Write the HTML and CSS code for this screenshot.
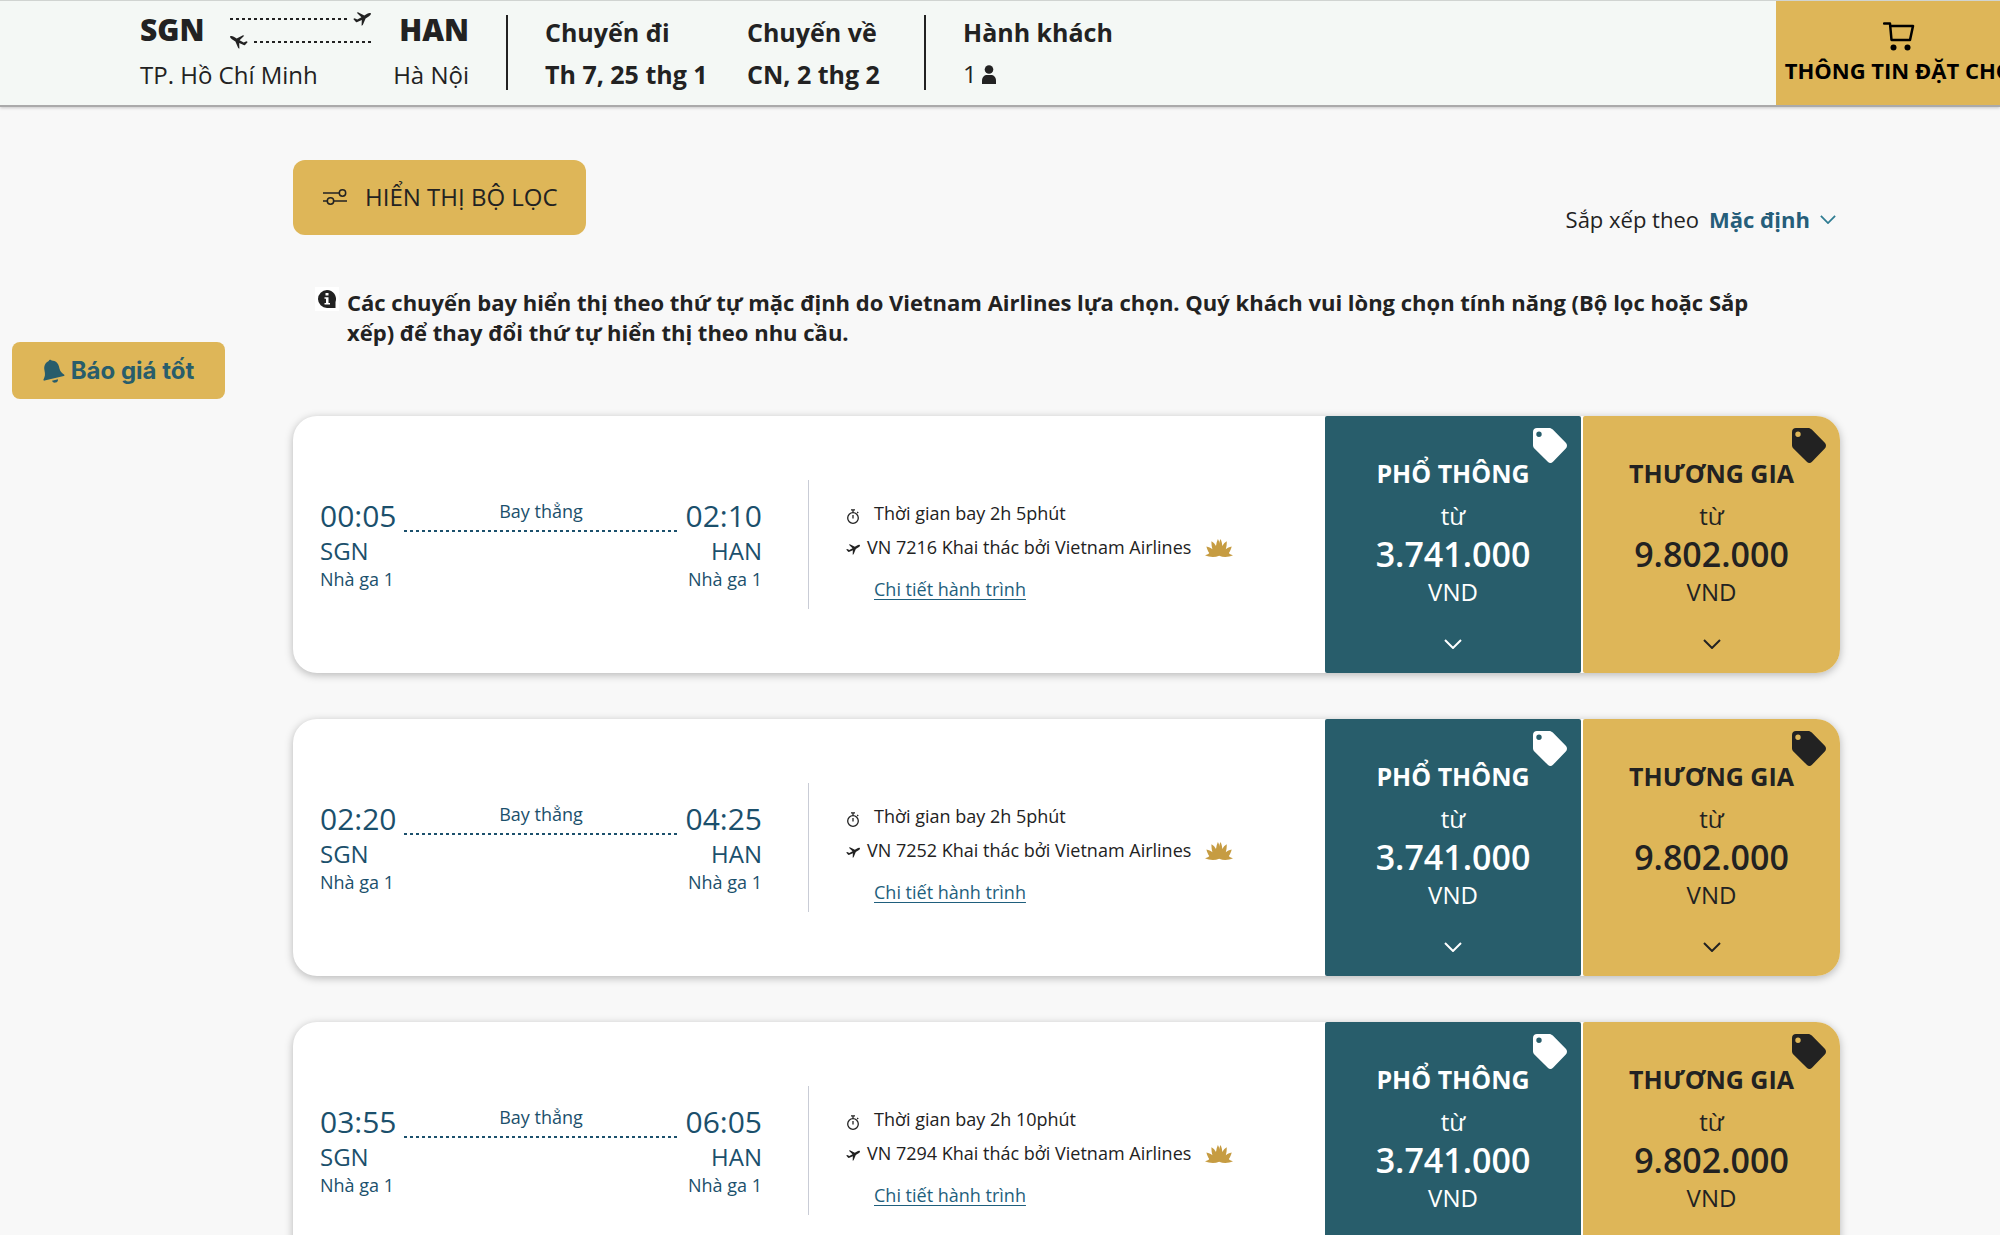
FILE: index.html
```
<!DOCTYPE html>
<html lang="vi">
<head>
<meta charset="utf-8">
<meta name="viewport" content="width=device-width, initial-scale=1">
<title>Chọn chuyến bay</title>
<link rel="stylesheet" href="styles.css">
</head>
<body>
<svg class="sprite" aria-hidden="true">
  <symbol id="plane" viewBox="0 0 18 14"><path d="M17.800 1.300C17 .7 15.500 1 14.200 1.800L11.300 3.600 5 .3 3.800.8l4.600 4.500L4.300 7.500 1.500 6.300.3 6.900l2.200 2.700c.5.600 1 .7 1.800.3l4.500-1.900L8.600 13.700l1.200-.6 2.800-6.700 3.500-2.200C17.400 3.300 18.300 2 17.800 1.300Z"/></symbol>
  <symbol id="chevron" viewBox="0 0 18 10"><path d="M1 1l8 8 8-8" fill="none" stroke="currentColor" stroke-width="2"/></symbol>
  <symbol id="tag" viewBox="0 0 34 35"><path fill-rule="evenodd" d="M4 0h12c1.600 0 2.700.5 3.800 1.600l13 13.200c1.600 1.700 1.600 4 0 5.700L20 33.800c-1.600 1.600-3.600 1.600-5.200 0L1.400 20.400C.4 19.400 0 18.400 0 17V4C0 1.600 1.600 0 4 0Zm2 3.600a2.700 2.700 0 1 0 0 5.400 2.700 2.700 0 0 0 0-5.400Z"/></symbol>
  <symbol id="timer" viewBox="0 0 14 15"><g fill="none" stroke="currentColor" stroke-width="1.300"><circle cx="7" cy="9" r="5.300"/><path d="M5 .8h4M7 1v2.500M7 6v3.500M11.200 4l1-1"/></g></symbol>
  <symbol id="lotus" viewBox="0 0 28 18"><path d="M0 16.200C2.400 15.600 3.600 15 4.200 14 2.800 12 2 10 1.400 7.600c2.400.4 4.300 1.200 6 2.600C6.600 7.300 6.300 4.800 6.500 2.200c2 1.200 3.500 2.800 4.500 4.800.3-2.600 1-4.800 1.900-7 1 1.500 1.300 3 1.300 4.800C14.300 3 14.700 1.500 15.600 0c1 2.200 1.500 4.400 1.700 7 1-2 2.500-3.600 4.400-4.800.2 2.600-.1 5.100-.9 8 1.700-1.400 3.500-2.200 5.900-2.600-.6 2.400-1.400 4.400-2.800 6.400.6 1 1.800 1.600 4.100 2.200-4.500 2-9.500 2.300-13.800.5C9.700 18.500 4.500 18.200 0 16.200Z"/></symbol>
</svg>

<header class="topbar">
  <div class="route">
    <div class="stop">
      <strong class="code">SGN</strong>
      <span class="city">TP. Hồ Chí Minh</span>
    </div>
    <div class="path">
      <div class="leg"><i class="dash"></i><svg class="plane-lg"><use href="#plane"/></svg></div>
      <div class="leg back"><i class="dash"></i><svg class="plane-lg"><use href="#plane"/></svg></div>
    </div>
    <div class="stop end">
      <strong class="code">HAN</strong>
      <span class="city">Hà Nội</span>
    </div>
  </div>
  <div class="facts dates">
    <div class="fact"><b>Chuyến đi</b><b>Th 7, 25 thg 1</b></div>
    <div class="fact"><b>Chuyến về</b><b>CN, 2 thg 2</b></div>
  </div>
  <div class="facts">
    <div class="fact"><b>Hành khách</b><span class="count">1
      <svg class="person" viewBox="0 0 14 19"><circle cx="7" cy="4.500" r="4.300"/><path d="M0 19v-3.500C0 12 2.500 10 5 10h4c2.500 0 5 2 5 5.500V19Z"/></svg></span></div>
  </div>
  <button class="cart" type="button">
    <svg class="cart-icon" viewBox="0 0 32 29"><path d="M1 1.500h6L8.500 18H27l3-14H7.500" fill="none" stroke="currentColor" stroke-width="2.500" stroke-linejoin="round" stroke-linecap="round"/><circle cx="10.500" cy="25.500" r="3"/><circle cx="24.500" cy="25.500" r="3"/></svg>
    THÔNG TIN ĐẶT CHỖ
  </button>
</header>

<button class="alert" type="button">
  <svg class="bell" viewBox="0 0 22 24"><path d="M5.800 2C6 .6 8 .2 8.600 1.500c4 .2 6.600 2.600 7.500 6.500.9 4 2 5.700 4.900 7.400.8.500.6 1.400-.2 1.600L1.600 21.600c-.9.200-1.500-.6-1-1.400C2.200 17.200 2.300 15.300 1.500 11.500.6 7 2.200 3.800 5.800 2Z"/><path d="M9 21.700l6-1.500c.2 1.600-.8 3-2.400 3.400C11 23.900 9.500 23.100 9 21.700Z"/></svg>
  Báo giá tốt
</button>

<main class="results">
  <div class="tools">
    <button class="filter" type="button">
      <svg class="sliders" viewBox="0 0 24 16"><g fill="none" stroke="currentColor" stroke-width="1.500"><path d="M0 4h16M0 12h4M11 12h13"/><circle cx="19.500" cy="4" r="3.200"/><circle cx="7.500" cy="12" r="3.200"/></g></svg>
      HIỂN THỊ BỘ LỌC
    </button>
    <div class="sort">
      <label for="sort">Sắp xếp theo</label>
      <select id="sort"><option>Mặc định</option></select>
      <svg class="sort-arrow"><use href="#chevron"/></svg>
    </div>
  </div>

  <div class="note">
    <svg class="info" viewBox="0 0 24 24"><path d="M12 3a9 9 0 1 0 0 18h8.500v-6A9 9 0 0 0 12 3Z"/><path d="M10.500 6h3v2.600h-3zM9.500 10.200h4V16H15v1.600H9.500V16H11v-4.200H9.500Z" fill="#fff"/></svg>
    <p>Các chuyến bay hiển thị theo thứ tự mặc định do Vietnam Airlines lựa chọn. Quý khách vui lòng chọn tính năng (Bộ lọc hoặc Sắp xếp) để thay đổi thứ tự hiển thị theo nhu cầu.</p>
  </div>

  <article class="card">
    <div class="trip">
      <div class="point"><span class="time">00:05</span><span class="airport">SGN</span><span class="gate">Nhà ga 1</span></div>
      <div class="direct">Bay thẳng</div>
      <div class="point end"><span class="time">02:10</span><span class="airport">HAN</span><span class="gate">Nhà ga 1</span></div>
    </div>
    <div class="details">
      <div class="line timing"><svg class="timer"><use href="#timer"/></svg>Thời gian bay 2h 5phút</div>
      <div class="line"><svg class="plane-sm"><use href="#plane"/></svg>VN 7216 Khai thác bởi Vietnam Airlines<svg class="lotus"><use href="#lotus"/></svg></div>
      <a href="#">Chi tiết hành trình</a>
    </div>
    <button class="fare economy" type="button"><svg class="tag"><use href="#tag"/></svg><b class="cabin">PHỔ THÔNG</b><span>từ</span><b class="price">3.741.000</b><span>VND</span><svg class="open"><use href="#chevron"/></svg></button>
    <button class="fare business" type="button"><svg class="tag"><use href="#tag"/></svg><b class="cabin">THƯƠNG GIA</b><span>từ</span><b class="price">9.802.000</b><span>VND</span><svg class="open"><use href="#chevron"/></svg></button>
  </article>

  <article class="card">
    <div class="trip">
      <div class="point"><span class="time">02:20</span><span class="airport">SGN</span><span class="gate">Nhà ga 1</span></div>
      <div class="direct">Bay thẳng</div>
      <div class="point end"><span class="time">04:25</span><span class="airport">HAN</span><span class="gate">Nhà ga 1</span></div>
    </div>
    <div class="details">
      <div class="line timing"><svg class="timer"><use href="#timer"/></svg>Thời gian bay 2h 5phút</div>
      <div class="line"><svg class="plane-sm"><use href="#plane"/></svg>VN 7252 Khai thác bởi Vietnam Airlines<svg class="lotus"><use href="#lotus"/></svg></div>
      <a href="#">Chi tiết hành trình</a>
    </div>
    <button class="fare economy" type="button"><svg class="tag"><use href="#tag"/></svg><b class="cabin">PHỔ THÔNG</b><span>từ</span><b class="price">3.741.000</b><span>VND</span><svg class="open"><use href="#chevron"/></svg></button>
    <button class="fare business" type="button"><svg class="tag"><use href="#tag"/></svg><b class="cabin">THƯƠNG GIA</b><span>từ</span><b class="price">9.802.000</b><span>VND</span><svg class="open"><use href="#chevron"/></svg></button>
  </article>

  <article class="card">
    <div class="trip">
      <div class="point"><span class="time">03:55</span><span class="airport">SGN</span><span class="gate">Nhà ga 1</span></div>
      <div class="direct">Bay thẳng</div>
      <div class="point end"><span class="time">06:05</span><span class="airport">HAN</span><span class="gate">Nhà ga 1</span></div>
    </div>
    <div class="details">
      <div class="line timing"><svg class="timer"><use href="#timer"/></svg>Thời gian bay 2h 10phút</div>
      <div class="line"><svg class="plane-sm"><use href="#plane"/></svg>VN 7294 Khai thác bởi Vietnam Airlines<svg class="lotus"><use href="#lotus"/></svg></div>
      <a href="#">Chi tiết hành trình</a>
    </div>
    <button class="fare economy" type="button"><svg class="tag"><use href="#tag"/></svg><b class="cabin">PHỔ THÔNG</b><span>từ</span><b class="price">3.741.000</b><span>VND</span><svg class="open"><use href="#chevron"/></svg></button>
    <button class="fare business" type="button"><svg class="tag"><use href="#tag"/></svg><b class="cabin">THƯƠNG GIA</b><span>từ</span><b class="price">9.802.000</b><span>VND</span><svg class="open"><use href="#chevron"/></svg></button>
  </article>
</main>
</body>
</html>
```
FILE: styles.css
```
:root {
  --gold: #deb658;
  --teal: #285d6b;
  --ink: #222;
  --blue: #1b506c;
}
* { box-sizing: border-box; }
body {
  margin: 0;
  background: #f8f8f8;
  color: var(--ink);
  font-family: "Open Sans", "Noto Sans", sans-serif;
  font-size: 18px;
}
button, select { font: inherit; color: inherit; border: 0; padding: 0; cursor: pointer; }
svg { flex: none; fill: currentColor; }
.sprite { position: absolute; width: 0; height: 0; }

.topbar {
  display: flex;
  height: 107px;
  padding-left: 140px;
  overflow: hidden;
  background: #f4f8f5;
  border-top: 1px solid #d0d4d1;
  border-bottom: 2px solid #aaa;
  box-shadow: 0 1px 3px #0003;
  font-size: 24px;
  white-space: nowrap;
}
.route { display: flex; width: 329px; position: relative; justify-content: space-between; }
.stop { display: flex; flex-direction: column; }
.stop.end { text-align: right; }
.code { font-size: 30px; font-weight: 800; line-height: 40px; padding-top: 9px; }
.city { line-height: 34px; padding-top: 8px; }
.path { position: absolute; left: 90px; top: 11px; width: 141px; }
.leg { display: flex; align-items: center; gap: 4px; height: 14px; }
.leg.back { transform: scaleX(-1); margin-top: 9px; }
.dash { flex: 1; height: 2px; background: repeating-linear-gradient(90deg, #222 0 3px, transparent 3px 6px); }
.plane-lg { width: 18px; height: 14px; }
.facts {
  display: flex;
  gap: 30px;
  margin: 14px 0 15px 37px;
  padding-left: 37px;
  border-left: 2px solid #222;
}
.fact { display: flex; flex-direction: column; gap: 8px; line-height: 34px; }
.fact b { font-size: 25px; font-weight: 700; }
.dates { display: grid; grid-template-columns: 172px 140px; }
.count { display: flex; align-items: center; gap: 5px; }
.person { width: 14px; height: 19px; }
.cart {
  flex: none;
  display: flex;
  flex-direction: column;
  align-items: center;
  width: 246px;
  margin: 0 -22px 0 auto;
  padding-top: 21px;
  gap: 3px;
  background: var(--gold);
  color: #000;
  font-size: 22px;
  font-weight: 700;
  line-height: 32px;
}
.cart-icon { width: 32px; height: 29px; }

.alert {
  position: fixed;
  left: 12px;
  top: 342px;
  display: flex;
  align-items: center;
  justify-content: center;
  gap: 6px;
  width: 213px;
  height: 57px;
  border-radius: 8px;
  background: var(--gold);
  color: var(--teal);
  font-family: Inter, sans-serif;
  font-size: 24px;
  font-weight: 700;
}
.bell { width: 22px; height: 24px; }

.results { padding: 53px 160px 46px 293px; }
.tools { display: flex; justify-content: space-between; align-items: flex-start; }
.filter {
  display: flex;
  align-items: center;
  gap: 18px;
  padding: 19px 28px 21px 30px;
  border-radius: 12px;
  background: var(--gold);
  font-size: 24px;
  line-height: 35px;
}
.sliders { width: 24px; height: 16px; }
.sort { display: flex; align-items: center; gap: 10px; margin: 44px 4px 0 0; font-size: 22px; line-height: 30px; }
.sort select { appearance: none; background: none; color: #265e7a; font-weight: 700; }
.sort-arrow { width: 16px; height: 9px; color: #2f7c92; }

.note { display: flex; gap: 8px; padding: 52px 52px 0 22px; }
.note p { margin: 0; font-size: 22px; font-weight: 700; line-height: 30px; }
.info { width: 24px; height: 24px; background: #fff; }

.card {
  display: flex;
  margin-top: 46px;
  border-radius: 24px;
  background: #fff;
  box-shadow: 0 2px 8px #0004;
  overflow: hidden;
}
.note + .card { margin-top: 69px; }
.trip {
  flex: 1;
  align-self: center;
  display: flex;
  height: 129px;
  padding: 15px 46px 0 27px;
  border-right: 1px solid #c9ccd6;
  color: var(--blue);
}
.point { display: flex; flex-direction: column; }
.point.end { text-align: right; }
.time { font-size: 30px; line-height: 41px; }
.airport { font-size: 24px; line-height: 30px; }
.gate { line-height: 26px; }
.direct {
  flex: 1;
  height: 37px;
  margin: 0 7px;
  padding-top: 4px;
  text-align: center;
  line-height: 25px;
  background: repeating-linear-gradient(90deg, currentColor 0 3px, transparent 3px 6px) bottom / 100% 2px no-repeat;
}
.details {
  display: flex;
  flex-direction: column;
  align-items: flex-start;
  width: 516px;
  padding: 85px 0 0 37px;
  line-height: 25px;
}
.details a { margin: 17px 0 0 28px; color: #1f5f7d; text-underline-offset: 3px; }
.line { display: flex; align-items: center; gap: 7px; }
.timing { gap: 14px; margin-bottom: 9px; }
.timer { width: 14px; height: 15px; margin-top: 5px; }
.plane-sm { width: 14px; height: 11px; margin-top: 3px; }
.lotus { width: 28px; height: 18px; margin-left: 7px; color: #c69c42; }
.fare {
  position: relative;
  display: flex;
  flex-direction: column;
  align-items: center;
  width: 257px;
  padding: 40px 0 24px;
  border-radius: 2px;
  font-size: 24px;
  line-height: 34px;
}
.economy { width: 256px; background: var(--teal); color: #fff; }
.business { background: var(--gold); margin-left: 2px; }
.cabin { font-size: 25px; font-weight: 700; margin-bottom: 9px; }
.price { font-size: 34px; font-weight: 600; line-height: 42px; }
.tag { position: absolute; right: 14px; top: 12px; width: 34px; height: 35px; }
.open { width: 18px; height: 10px; margin-top: 30px; }
```
